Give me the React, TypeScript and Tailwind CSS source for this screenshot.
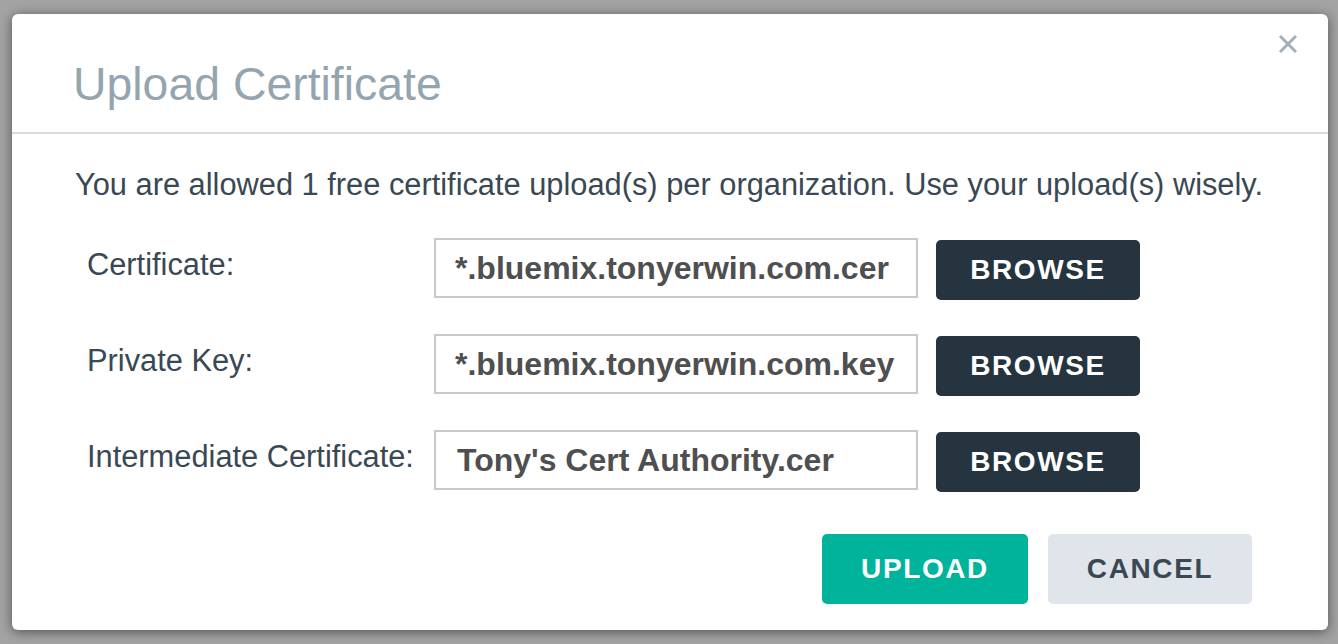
import React from "react";

const font = { fontFamily: '"Liberation Sans", Arial, Helvetica, sans-serif' };

function Row({ label, value, padLeft }: { label: string; value: string; padLeft?: string }) {
  return (
    <div className="flex items-start">
      <div className="w-[347px] h-[60px] flex items-center text-[30.8px] leading-[30px] text-[#3a4853] pb-[6px] whitespace-nowrap">
        {label}
      </div>
      <div className="w-[484px] h-[60px] border-2 border-[#c8c8c8] flex items-center pl-[19px] text-[32px] font-bold text-[#4f4f4f] whitespace-nowrap overflow-hidden">
        <span className={padLeft}>{value}</span>
      </div>
      <button className="ml-[18px] mt-[2px] w-[204px] h-[60px] rounded-[5px] bg-[#263440] text-white text-[28px] font-bold tracking-[1.6px] flex items-center justify-center">
        BROWSE
      </button>
    </div>
  );
}

export default function App() {
  return (
    <div className="w-[1338px] h-[644px] bg-[#a3a3a3] pt-[14px] pl-[12px]" style={font}>
      <div className="relative w-[1316px] h-[616px] bg-white rounded-[6px] shadow-[0_2px_12px_rgba(0,0,0,0.5)] flex flex-col">
        <div className="h-[120px] border-b-2 border-[#d6dce0] pl-[61px] pt-[47px]">
          <h1 className="text-[46.4px] leading-[46px] text-[#95a5b0] whitespace-nowrap">Upload Certificate</h1>
        </div>
        <button className="absolute left-[1266px] top-[20px] w-[20px] h-[20px]" aria-label="close">
          <svg width="20" height="20" viewBox="0 0 20 20">
            <path d="M2 2 L18 18 M18 2 L2 18" stroke="#a2b0b9" strokeWidth="3" strokeLinecap="butt" />
          </svg>
        </button>
        <div className="pl-[63px] pt-[36px] flex flex-col">
          <p className="text-[30.8px] leading-[30px] text-[#3a4853] whitespace-nowrap">
            You are allowed 1 free certificate upload(s) per organization. Use your upload(s) wisely.
          </p>
          <div className="pl-[12px] mt-[38px] flex flex-col gap-[34px]">
            <Row label="Certificate:" value="*.bluemix.tonyerwin.com.cer" />
            <Row label="Private Key:" value="*.bluemix.tonyerwin.com.key" />
            <Row label="Intermediate Certificate:" value="Tony's Cert Authority.cer" padLeft="pl-[2px]" />
          </div>
          <div className="flex justify-end gap-[20px] pr-[76px] mt-[42px]">
            <button className="w-[206px] h-[70px] rounded-[5px] bg-[#00b39b] text-white text-[28px] font-bold tracking-[1.6px]">
              UPLOAD
            </button>
            <button className="w-[204px] h-[70px] rounded-[5px] bg-[#dfe5eb] text-[#3a4853] text-[28px] font-bold tracking-[1.6px]">
              CANCEL
            </button>
          </div>
        </div>
      </div>
    </div>
  );
}
